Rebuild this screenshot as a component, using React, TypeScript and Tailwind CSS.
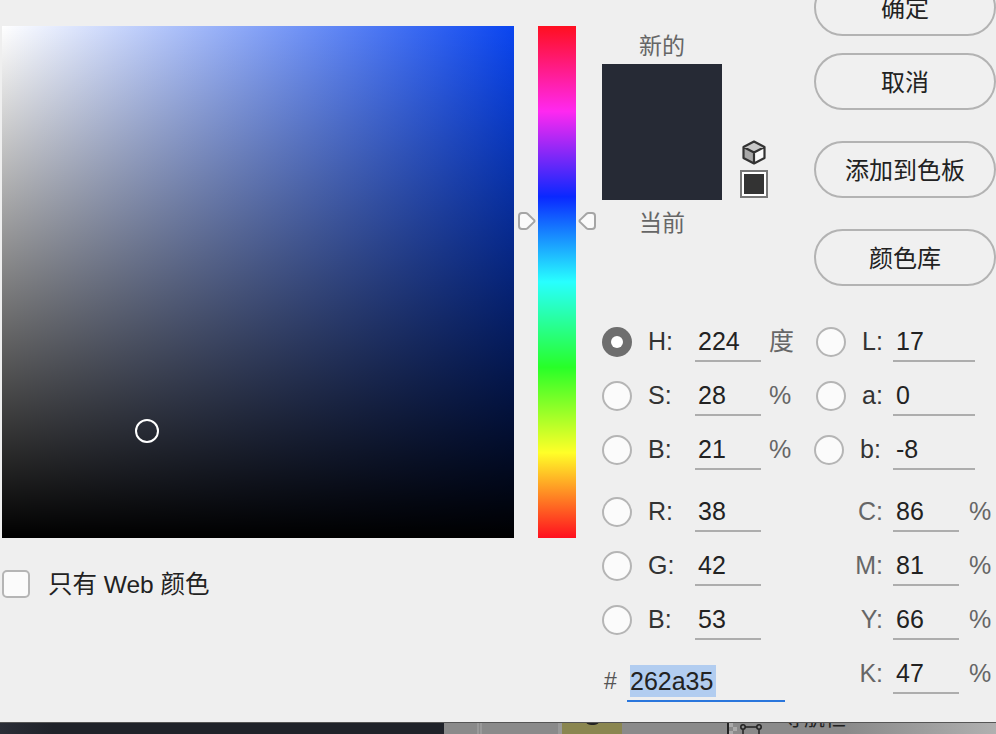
const sans = "font-['Liberation_Sans','Noto_Sans_CJK_SC',sans-serif]";

function Radio({ checked = false, className = "" }: { checked?: boolean; className?: string }) {
  if (checked) {
    return (
      <span className={`flex h-[30px] w-[30px] shrink-0 items-center justify-center rounded-full bg-[#6e6e6e] ${className}`}>
        <span className="h-[12px] w-[12px] rounded-full bg-white" />
      </span>
    );
  }
  return <span className={`h-[30px] w-[30px] shrink-0 rounded-full border-2 border-[#b5b5b5] bg-[#fbfbfb] ${className}`} />;
}

function Underlined({ value, width }: { value: string; width: string }) {
  return (
    <span className={`flex h-[40px] items-center border-b-2 border-[#adadad] pl-[3px] pt-[2px] text-[25px] text-[#222] ${width}`}>
      {value}
    </span>
  );
}

function LeftField({ label, value, unit, checked }: { label: string; value: string; unit: string; checked?: boolean }) {
  return (
    <div className="flex w-[214px] items-center">
      <Radio checked={checked} />
      <span className="ml-[16px] w-[47px] text-[25px] text-[#333]">{label}</span>
      <Underlined value={value} width="w-[66px]" />
      <span className="ml-[8px] text-[25px] text-[#666]">{unit}</span>
    </div>
  );
}

function LabField({ label, value, shift }: { label: string; value: string; shift?: boolean }) {
  return (
    <div className={`flex items-center ${shift ? "-ml-[2px]" : ""}`}>
      <Radio />
      <span className={`ml-[16px] text-[25px] text-[#333] ${shift ? "w-[33px]" : "w-[31px]"}`}>{label}</span>
      <Underlined value={value} width="w-[82px]" />
    </div>
  );
}

function CmykField({ label, value }: { label: string; value: string }) {
  return (
    <div className="flex items-center">
      <span className="w-[77px] pr-[10px] text-right text-[25px] text-[#666]">{label}</span>
      <Underlined value={value} width="w-[66px]" />
      <span className="ml-[10px] text-[25px] text-[#666]">%</span>
    </div>
  );
}

function DialogButton({ children, className = "" }: { children: string; className?: string }) {
  return (
    <button className={`h-[57px] w-[182px] rounded-full border-2 border-[#b3b3b3] bg-[#f0f0f0] pt-[3px] text-[24px] text-[#222] ${className}`}>
      {children}
    </button>
  );
}

function Row({ children, className = "" }: { children: React.ReactNode; className?: string }) {
  return <div className={`flex h-[54px] items-center ${className}`}>{children}</div>;
}

function PointerRight({ className }: { className: string }) {
  return (
    <svg className={className} width="18" height="18" viewBox="0 0 18 18">
      <path d="M1 4a3 3 0 0 1 3-3h3.500a3 3 0 0 1 2 .8l6.600 6.300a1.200 1.200 0 0 1 0 1.800l-6.600 6.300a3 3 0 0 1-2 .8H4a3 3 0 0 1-3-3z" fill="#fafafa" stroke="#a5a5a5" strokeWidth="2" />
    </svg>
  );
}

export default function App() {
  return (
    <div className={`flex h-[734px] w-[996px] flex-col overflow-hidden bg-[#efefef] ${sans}`}>
      <div className="flex h-[722px] shrink-0">
        {/* saturation / brightness field and web-only checkbox */}
        <div className="ml-[2px] mt-[26px] w-[512px]">
          <div className="relative h-[512px] bg-[linear-gradient(to_top,#000,transparent),linear-gradient(to_right,#fff,#0a45f0)]">
            <span className="absolute left-[133px] top-[393px] h-[24px] w-[24px] rounded-full border-2 border-white" />
          </div>
          <label className="mt-[32px] flex h-[28px] items-center">
            <span className="h-[28px] w-[28px] rounded-[5px] border-2 border-[#b5b5b5] bg-[#fbfbfb]" />
            <span className="ml-[18px] pt-[3px] text-[24.500px] text-[#222]">只有 Web 颜色</span>
          </label>
        </div>

        {/* hue strip */}
        <div className="relative ml-[24px] mt-[26px] h-[512px] w-[38px] bg-[linear-gradient(to_bottom,#ff0f1f,#ff28f0_16.67%,#0a28ff_33.33%,#28ffff_50%,#28ff28_66.67%,#ffff28_83.33%,#ff0f1f)]">
          <PointerRight className="absolute -left-[20px] top-[186px]" />
          <PointerRight className="absolute -right-[20px] top-[186px] rotate-180" />
        </div>

        <div className="ml-[26px] flex w-[394px] flex-col">
          <div className="flex h-[315px] shrink-0">
            {/* new / current swatch */}
            <div className="flex w-[120px] flex-col items-center pt-[31px] text-[23px] text-[#666]">
              <span className="h-[33px] leading-[30px]">新的</span>
              <div className="h-[136px] w-[120px] bg-[#262a35]" />
              <span className="mt-[8px] leading-[30px]">当前</span>
            </div>

            <div className="ml-[18px] flex w-[28px] flex-col items-center pt-[140px]">
              <svg width="24" height="25" viewBox="0 0 24 25">
                <path d="M12 1.500 22.500 7v11L12 23.500 1.500 18V7z" fill="#fafafa" />
                <path d="M12 1.500 22.500 7 12 12.500 1.500 7z" fill="#c8c8c8" />
                <path d="M1.500 7 12 12.500v11L1.500 18z" fill="#a8a8a8" />
                <path d="M12 1.500 22.500 7v11L12 23.500 1.500 18V7zM1.500 7 12 12.500 22.500 7M12 12.500v11" fill="none" stroke="#333" strokeWidth="2.200" strokeLinejoin="round" />
              </svg>
              <span className="mt-[5px] h-[28px] w-[28px] shrink-0 border-2 border-[#777] bg-[#333] shadow-[inset_0_0_0_2px_#fff]" />
            </div>

            <div className="ml-[46px] -mt-[21px] flex w-[182px] flex-col gap-[31px]">
              <DialogButton className="border-[#555]">确定</DialogButton>
              <DialogButton className="-mt-[14px]">取消</DialogButton>
              <DialogButton>添加到色板</DialogButton>
              <DialogButton>颜色库</DialogButton>
            </div>
          </div>

          {/* colour value fields */}
          <Row><LeftField checked label="H:" value="224" unit="度" /><LabField label="L:" value="17" /></Row>
          <Row><LeftField label="S:" value="28" unit="%" /><LabField label="a:" value="0" /></Row>
          <Row><LeftField label="B:" value="21" unit="%" /><LabField shift label="b:" value="-8" /></Row>
          <Row className="mt-[8px]"><LeftField label="R:" value="38" unit="" /><CmykField label="C:" value="86" /></Row>
          <Row><LeftField label="G:" value="42" unit="" /><CmykField label="M:" value="81" /></Row>
          <Row><LeftField label="B:" value="53" unit="" /><CmykField label="Y:" value="66" /></Row>
          <Row>
            <div className="mt-[15px] flex w-[214px] items-center">
              <span className="ml-[2px] w-[23px] text-[23px] text-[#555]">#</span>
              <span className="flex h-[40px] w-[158px] items-center border-b-2 border-[#2a76dc] pl-[3px] text-[25px] text-[#222]">
                <span className="bg-[#b2cdf0] pr-[3px] leading-[32px]">262a35</span>
              </span>
            </div>
            <CmykField label="K:" value="47" />
          </Row>
        </div>
      </div>

      {/* sliver of the window behind the dialog */}
      <div className="relative flex h-[12px] shrink-0 overflow-hidden border-t border-[#555] bg-[linear-gradient(to_right,#8a8a8a_85%,#b0b0b0)]">
        <div className="h-full w-[444px] bg-[linear-gradient(to_right,#2a2d36,#1f2229_12%)]" />
        <div className="ml-[33px] h-full w-[5px] border-x-2 border-[#9a9a9a]" />
        <div className="ml-[76px] h-full w-[4px] bg-[#9a9a9a]" />
        <div className="relative h-full w-[60px] bg-[#8a8650]">
          <span className="absolute -top-[10px] left-[23px] h-[12px] w-[15px] rounded-full bg-[#222]" />
        </div>
        <div className="ml-[105px] h-full w-[2px] bg-[#222]" />
        <svg className="absolute left-[729px] top-0" width="36" height="12" viewBox="0 0 36 12">
          <path d="M0 0h4v4H0zM4 4h4v4H4zM0 8h4v4H0z" fill="#aaa" />
          <path d="M14 4h16M14 7v5M30 7v5" stroke="#222" strokeWidth="1.500" fill="none" />
          <circle cx="14" cy="4" r="2.200" fill="#8a8a8a" stroke="#222" strokeWidth="1.500" />
          <circle cx="30" cy="4" r="2.200" fill="#8a8a8a" stroke="#222" strokeWidth="1.500" />
        </svg>
        <span className="absolute left-[783px] -top-[18px] text-[21px] leading-[26px] text-[#222]">导航栏</span>
      </div>
    </div>
  );
}
